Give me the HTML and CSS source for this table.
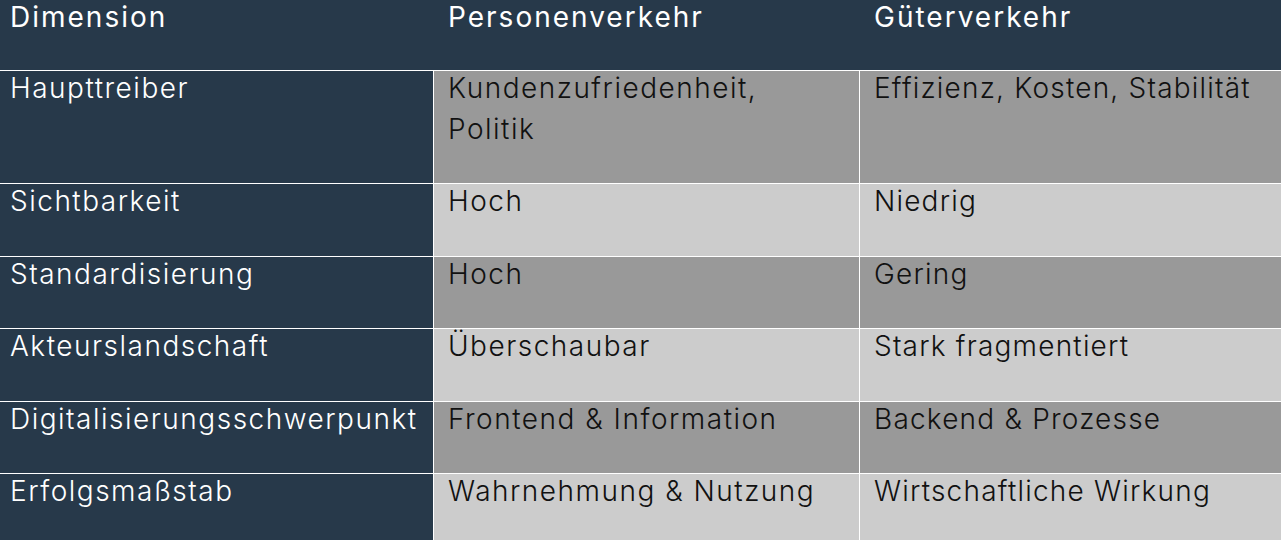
FILE: index.html
```html
<!DOCTYPE html>
<html lang="de">
<head>
<meta charset="utf-8">
<title>Personenverkehr vs. Güterverkehr</title>
<link rel="stylesheet" href="styles.css">
</head>
<body>
<div class="table">
  <div class="head">
    <div class="hcell c1"><span class="txt">Dimension</span></div>
    <div class="hcell c2"><span class="txt">Personenverkehr</span></div>
    <div class="hcell c3"><span class="txt">Güterverkehr</span></div>
  </div>
  <div class="body">
    <div class="cell c1 dim"><span class="txt">Haupttreiber</span></div>
    <div class="cell c2 dark"><span class="txt">Kundenzufriedenheit, Politik</span></div>
    <div class="cell c3 dark"><span class="txt">Effizienz, Kosten, Stabilität</span></div>

    <div class="cell c1 dim"><span class="txt">Sichtbarkeit</span></div>
    <div class="cell c2 light"><span class="txt">Hoch</span></div>
    <div class="cell c3 light"><span class="txt">Niedrig</span></div>

    <div class="cell c1 dim"><span class="txt">Standardisierung</span></div>
    <div class="cell c2 dark"><span class="txt">Hoch</span></div>
    <div class="cell c3 dark"><span class="txt">Gering</span></div>

    <div class="cell c1 dim"><span class="txt">Akteurslandschaft</span></div>
    <div class="cell c2 light"><span class="txt">Überschaubar</span></div>
    <div class="cell c3 light"><span class="txt">Stark fragmentiert</span></div>

    <div class="cell c1 dim"><span class="txt">Digitalisierungsschwerpunkt</span></div>
    <div class="cell c2 dark"><span class="txt">Frontend &amp; Information</span></div>
    <div class="cell c3 dark"><span class="txt">Backend &amp; Prozesse</span></div>

    <div class="cell c1 dim"><span class="txt">Erfolgsmaßstab</span></div>
    <div class="cell c2 light"><span class="txt">Wahrnehmung &amp; Nutzung</span></div>
    <div class="cell c3 light"><span class="txt">Wirtschaftliche Wirkung</span></div>
  </div>
</div>
</body>
</html>
```
FILE: styles.css
```css
html, body {
  margin: 0;
  padding: 0;
  background: #27394a;
  overflow: hidden;
}
.table {
  width: 1281px;
  font-family: "Inter", "Liberation Sans", sans-serif;
  font-size: 28px;
  line-height: 40.5px;
}
.head {
  display: grid;
  grid-template-columns: 434px 426px 1fr;
  background: #27394a;
  color: #ffffff;
  font-weight: 400;
  letter-spacing: 2px;
  height: 70px;
}
.hcell {
  padding-left: 14px;
}
.hcell.c1 { padding-left: 10px; }
.hcell.c3 { padding-left: 14px; }
.txt {
  display: block;
  margin-top: -3px;
}
.body {
  display: grid;
  grid-template-columns: 433px 425px 1fr;
  gap: 1px;
  padding-top: 1px;
  background: #ffffff;
}
.cell {
  font-weight: 300;
  letter-spacing: 1.5px;
  padding: 0 20px 34px 14px;
}
.cell.c1 { padding-left: 10px; padding-right: 6px; }
.cell.c3 { padding-left: 14px; letter-spacing: 1.2px; }
.dim {
  background: #27394a;
  color: #ffffff;
}
.dark {
  background: #999999;
  color: #111111;
}
.light {
  background: #cccccc;
  color: #111111;
}
```
